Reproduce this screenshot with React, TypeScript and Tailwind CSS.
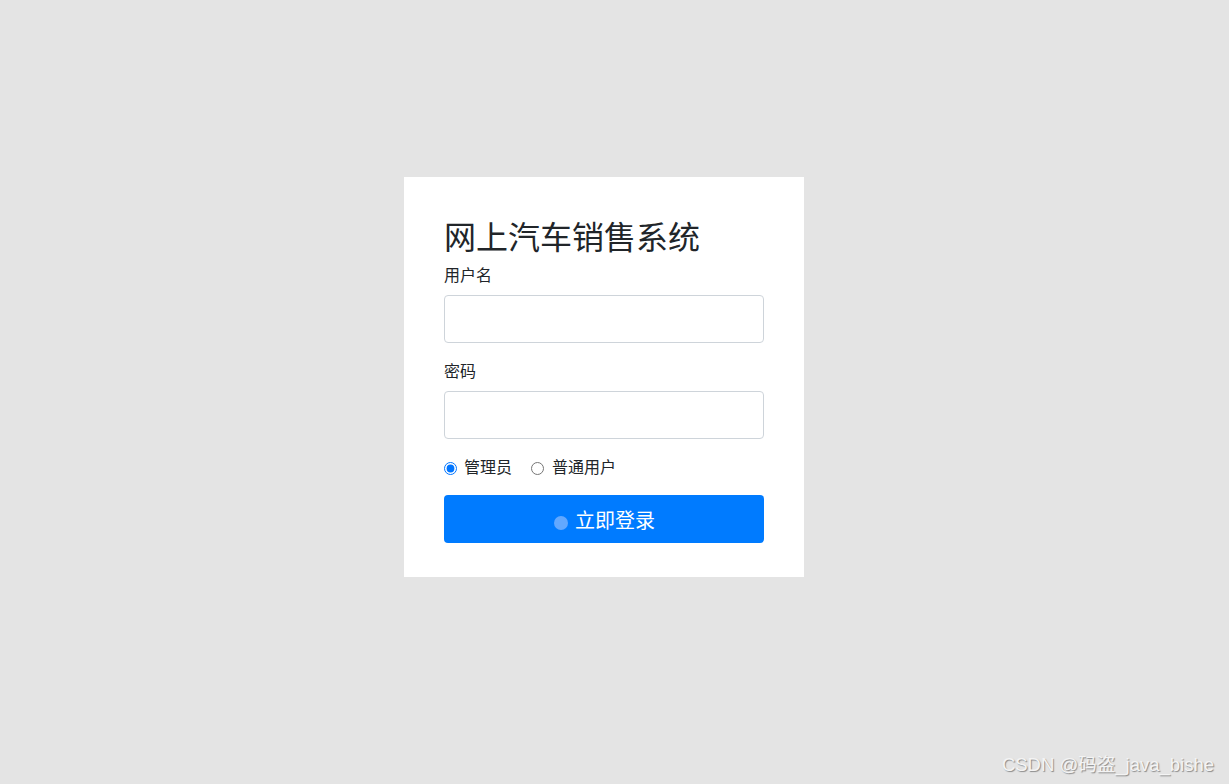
export default function App() {
  return (
    <div
      className="relative w-full h-[784px] bg-[#e4e4e4] flex items-start pt-[177px] pl-[404px] text-[#212529]"
      style={{ fontFamily: '"Liberation Sans", "Noto Sans CJK SC", sans-serif' }}
    >
      <div className="w-[400px] h-[400px] bg-white px-10 pt-10">
        <h2 className="text-[32px] leading-[38px] mt-[2px] mb-[6px] font-normal">网上汽车销售系统</h2>

        <div className="mb-4">
          <label className="block text-[16px] leading-[22px] pt-[2px] mb-2">用户名</label>
          <input
            type="text"
            className="block w-full h-12 px-3 border border-[#ced4da] rounded bg-white outline-none"
          />
        </div>

        <div className="mb-4">
          <label className="block text-[16px] leading-[22px] pt-[2px] mb-2">密码</label>
          <input
            type="password"
            className="block w-full h-12 px-3 border border-[#ced4da] rounded bg-white outline-none"
          />
        </div>

        <div className="flex items-center h-6 pt-[2px] mb-4 text-[16px]">
          <label className="flex items-center">
            <input type="radio" name="role" defaultChecked className="w-[13px] h-[13px] m-0 accent-[#0075ff]" />
            <span className="ml-[7px]">管理员</span>
          </label>
          <label className="flex items-center ml-[19px]">
            <input type="radio" name="role" className="w-[13px] h-[13px] m-0" />
            <span className="ml-[8px]">普通用户</span>
          </label>
        </div>

        <button className="relative w-full h-12 bg-[#007bff] rounded text-white text-[20px] flex items-center justify-center">
          <span className="absolute left-[110px] top-[21px] w-[14px] h-[14px] rounded-full bg-[#62a8ff]" />
          <span className="ml-[22px] mt-[4px]">立即登录</span>
        </button>
      </div>

      <div
        className="absolute right-[15px] bottom-[9px] text-[18.5px] leading-5 text-[#f4f4f4]"
        style={{ textShadow: "1px 1px 1px #8a8a8a" }}
      >
        CSDN @码盗_java_bishe
      </div>
    </div>
  );
}
